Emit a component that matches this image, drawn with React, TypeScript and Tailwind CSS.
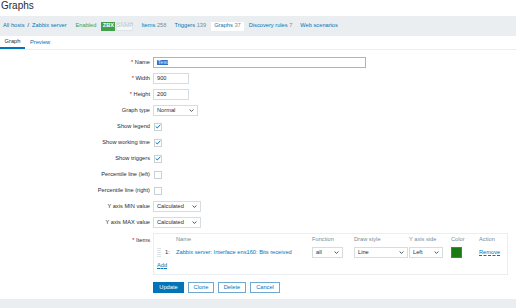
import { ReactNode } from "react";

const Chevron = () => (
  <svg width="5" height="3" viewBox="0 0 5 3" className="shrink-0">
    <path d="M0.6 0.5 L2.5 2.4 L4.4 0.5" fill="none" stroke="#1f2c33" strokeWidth="0.8" />
  </svg>
);

const Select = ({ value, width }: { value: string; width: string }) => (
  <div
    className={`${width} h-[11px] border border-[#d5dde2] bg-white flex items-center justify-between px-[3px]`}
  >
    <span>{value}</span>
    <Chevron />
  </div>
);

const Input = ({ value, width }: { value: string; width: string }) => (
  <div className={`${width} h-[11px] border border-[#d5dde2] bg-white flex items-center px-[3px]`}>
    {value}
  </div>
);

const Check = ({ checked }: { checked?: boolean }) => (
  <div className="w-[8px] h-[8px] border border-[#c9d2d7] bg-white flex items-center justify-center">
    {checked && (
      <svg width="6" height="5" viewBox="0 0 6 5">
        <path d="M0.7 2.5 L2.3 4 L5.3 0.8" fill="none" stroke="#0275b8" strokeWidth="1" />
      </svg>
    )}
  </div>
);

const Label = ({ children, required }: { children: ReactNode; required?: boolean }) => (
  <div className="text-right whitespace-nowrap">
    {required && <span className="text-[#d40000]">* </span>}
    {children}
  </div>
);

const Handle = () => (
  <svg width="4" height="11" viewBox="0 0 4 11">
    {[1, 3, 5, 7, 9].map((y) => (
      <g key={y}>
        <rect x="0.5" y={y} width="1" height="1" fill="#b8c4ca" />
        <rect x="2.5" y={y} width="1" height="1" fill="#b8c4ca" />
      </g>
    ))}
  </svg>
);

const App = () => {
  return (
    <div className="w-[516px] h-[308px] bg-white flex flex-col overflow-hidden font-['Liberation_Sans',Arial,sans-serif] text-[5.7px] leading-none text-[#1f2c33]">
      <div className="h-[16px] shrink-0 pl-[1px] text-[10px] leading-[12px]">Graphs</div>

      <div className="h-[20px] shrink-0 bg-[#ebeef0] flex items-center pl-[3px] whitespace-nowrap">
        <span className="text-[#0275b8]">All hosts</span>
        <span className="ml-[3px]">/</span>
        <span className="ml-[3px] text-[#0275b8]">Zabbix server</span>
        <span className="ml-[9px] text-[#429e47]">Enabled</span>
        <span className="ml-[5px] w-[14px] h-[9px] bg-[#429e47] text-white font-bold flex items-center justify-center">
          ZBX
        </span>
        <span className="ml-[1px] w-[17px] h-[9px] bg-[#f6f7f8] border border-[#dde3e6] text-[#b5c1c7] flex items-center justify-center">
          SNMP
        </span>
        <span className="ml-[8px] text-[#0275b8]">
          Items <span className="text-[#768d99]">258</span>
        </span>
        <span className="ml-[8px] text-[#0275b8]">
          Triggers <span className="text-[#768d99]">139</span>
        </span>
        <span className="ml-[5px] h-[9px] px-[3px] bg-white flex items-center text-[#0275b8]">
          Graphs&nbsp;<span className="text-[#768d99]">37</span>
        </span>
        <span className="ml-[5px] text-[#0275b8]">
          Discovery rules <span className="text-[#768d99]">7</span>
        </span>
        <span className="ml-[8px] text-[#0275b8]">Web scenarios</span>
      </div>

      <div className="h-[14px] shrink-0 flex border-b border-[#ebeef0]">
        <div className="w-[25px] flex items-center justify-center border-b-2 border-[#0275b8]">Graph</div>
        <div className="ml-[5px] flex items-center text-[#0275b8]">Preview</div>
      </div>

      <div className="flex-1 pt-[7px]">
        <div className="grid grid-cols-[150px_1fr] gap-x-[3px] gap-y-[5px] items-center">
          <Label required>Name</Label>
          <div className="w-[213px] h-[11px] border border-[#8fbce0] bg-white flex items-center px-[3px]">
            <span className="bg-[#3070c9] text-[#dce8f8] px-[0.5px]">Test</span>
          </div>

          <Label required>Width</Label>
          <Input value="900" width="w-[36px]" />

          <Label required>Height</Label>
          <Input value="200" width="w-[36px]" />

          <Label>Graph type</Label>
          <Select value="Normal" width="w-[45px]" />

          <Label>Show legend</Label>
          <div className="h-[11px] flex items-center pl-[1px]">
            <Check checked />
          </div>

          <Label>Show working time</Label>
          <div className="h-[11px] flex items-center pl-[1px]">
            <Check checked />
          </div>

          <Label>Show triggers</Label>
          <div className="h-[11px] flex items-center pl-[1px]">
            <Check checked />
          </div>

          <Label>Percentile line (left)</Label>
          <div className="h-[11px] flex items-center pl-[1px]">
            <Check />
          </div>

          <Label>Percentile line (right)</Label>
          <div className="h-[11px] flex items-center pl-[1px]">
            <Check />
          </div>

          <Label>Y axis MIN value</Label>
          <Select value="Calculated" width="w-[48px]" />

          <Label>Y axis MAX value</Label>
          <Select value="Calculated" width="w-[48px]" />

          <div className="self-start pt-[5px]">
            <Label required>Items</Label>
          </div>
          <div className="w-[355px] h-[42px] border border-[#ebeef0] pt-[2px]">
            <div className="grid grid-cols-[22px_136px_42px_55px_42px_28px_1fr] text-[#768d99] h-[8px] items-center">
              <div />
              <div>Name</div>
              <div>Function</div>
              <div>Draw style</div>
              <div>Y axis side</div>
              <div>Color</div>
              <div>Action</div>
            </div>
            <div className="mt-[3px] grid grid-cols-[22px_136px_42px_55px_42px_28px_1fr] h-[11px] items-center">
              <div className="flex items-center pl-[3px] gap-[4px]">
                <Handle />
                <span>1:</span>
              </div>
              <div className="text-[#0275b8] whitespace-nowrap">Zabbix server: Interface ens160: Bits received</div>
              <Select value="all" width="w-[31px]" />
              <Select value="Line" width="w-[54px]" />
              <Select value="Left" width="w-[34px]" />
              <div className="w-[11px] h-[11px] bg-[#1a7a12] border border-[#3b8f33]" />
              <div className="text-[#0275b8] underline decoration-dashed decoration-[0.5px]">Remove</div>
            </div>
            <div className="mt-[5px] pl-[3px] text-[#0275b8] underline decoration-dashed decoration-[0.5px]">Add</div>
          </div>

          <div />
          <div className="mt-[2px] flex gap-[4px]">
            <button className="w-[31px] h-[11px] bg-[#0275b8] text-white">Update</button>
            <button className="w-[26px] h-[11px] bg-white border border-[#6fa8d2] text-[#0275b8]">Clone</button>
            <button className="w-[28px] h-[11px] bg-white border border-[#6fa8d2] text-[#0275b8]">Delete</button>
            <button className="w-[30px] h-[11px] bg-white border border-[#6fa8d2] text-[#0275b8]">Cancel</button>
          </div>
        </div>
      </div>

      <div className="h-[9px] shrink-0 bg-[#ebeef0]" />
    </div>
  );
};

export default App;
